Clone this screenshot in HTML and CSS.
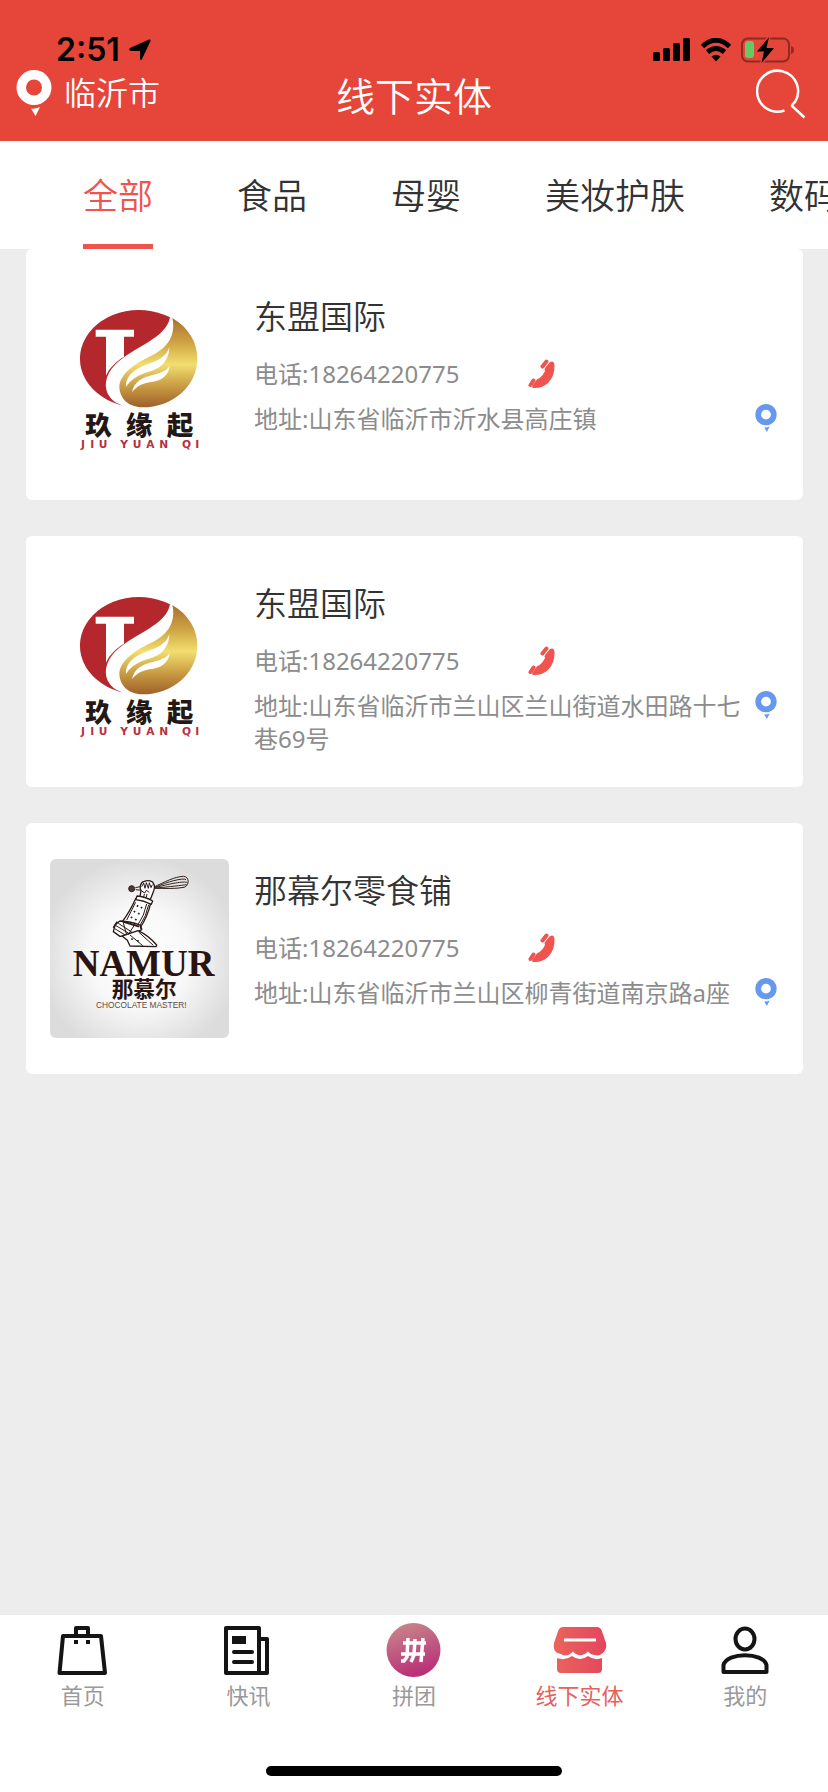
FILE: index.html
```html
<!DOCTYPE html>
<html lang="zh-CN">
<head>
    <meta charset="UTF-8">
    <meta name="viewport" content="width=device-width, initial-scale=1.0">
    <title>线下实体</title>
    <link rel="stylesheet" href="styles.css">
</head>
<body>
    <!-- Shared symbols -->
    <svg class="symbols" aria-hidden="true">
        <defs>
            <linearGradient id="gold" x1="0" y1="0" x2="0" y2="1">
                <stop offset="0" stop-color="#a8702f"/>
                <stop offset="0.28" stop-color="#d0a544"/>
                <stop offset="0.52" stop-color="#f2de6e"/>
                <stop offset="0.75" stop-color="#cb9f45"/>
                <stop offset="1" stop-color="#9f6029"/>
            </linearGradient>
            <radialGradient id="plate" cx="0.5" cy="0.55" r="0.56">
                <stop offset="0" stop-color="#ffffff"/>
                <stop offset="0.5" stop-color="#f8f8f8"/>
                <stop offset="1" stop-color="#dcdcdc"/>
            </radialGradient>
            <linearGradient id="shopFill" x1="0" y1="0" x2="1" y2="0">
                <stop offset="0" stop-color="#ea645c"/>
                <stop offset="1" stop-color="#e3465c"/>
            </linearGradient>
            <linearGradient id="groupFill" x1="0" y1="0" x2="0.3" y2="1">
                <stop offset="0" stop-color="#c98d8c"/>
                <stop offset="1" stop-color="#ba3278"/>
            </linearGradient>
        </defs>
        <symbol id="pin" viewBox="0 0 36 46">
            <path fill="currentColor" fill-rule="evenodd" d="M18 0a17.500 17.500 0 1 1 0 35a17.500 17.500 0 1 1 0-35zM18 9.500a8 8 0 1 0 0 16a8 8 0 1 0 0-16z"/>
            <path fill="currentColor" d="M15 38.500q4 .8 9-1.500l-4.500 9z"/>
        </symbol>
        <symbol id="phone" viewBox="0 0 28 30">
            <path fill="currentColor" d="M22 3Q26 1 26.500 6Q27 17 20 24Q14 29.500 5.500 29Q3.500 28.500 4.500 26.500L8.500 21Q9.500 19 11 19.500Q15 17 17 12Q16 10.500 17 9z"/>
            <path stroke="currentColor" stroke-width="4" stroke-linecap="round" fill="none" d="M14.500 7.500L18.500 2.500M2.500 26L5.500 21.500"/>
        </symbol>
    </svg>

    <header class="header">
        <!-- Status bar -->
        <div class="status">
            <div class="status-left">
                <span class="time">2:51</span>
                <svg width="22" height="22" viewBox="0 0 22 22"><path d="M1 9L20 .5Q22 0 21.500 2L13 20Q12 22 11 20V12H2Q-1 11 1 9z"/></svg>
            </div>
            <div class="status-right">
                <svg width="38" height="24" viewBox="0 0 38 24"><rect x="0" y="14" width="7" height="9" rx="1.500"/><rect x="10" y="10" width="7" height="13" rx="1.500"/><rect x="20" y="5" width="7" height="18" rx="1.500"/><rect x="30" y="0" width="7" height="23" rx="1.500"/></svg>
                <svg width="32" height="24" viewBox="0 0 32 24"><path d="M2.500 8.500Q16-4 29.500 8.500M7.500 14Q16 7 24.500 14" fill="none" stroke="#000" stroke-width="5"/><path d="M11.500 18.500q4.500-3.500 9 0L16 23.500z"/></svg>
                <svg width="54" height="26" viewBox="0 0 54 26">
                    <rect x="1" y="1.500" width="47" height="23" rx="6" fill="none" stroke="#8d2a24" stroke-width="2"/>
                    <path fill="#8d2a24" d="M50 9q3 1 3 4t-3 4z"/>
                    <rect x="4" y="4" width="9" height="17" rx="3" fill="#67c966"/>
                    <path d="M28 0L16 14.500H23L20.500 26L33 11H25.500z" stroke="#e64539" stroke-width="3" paint-order="stroke"/>
                </svg>
            </div>
        </div>
        <div class="title-bar">
            <button class="city" type="button">
                <svg width="36" height="46"><use href="#pin"/></svg>
                <span>临沂市</span>
            </button>
            <h1>线下实体</h1>
            <button class="search" type="button" aria-label="搜索">
                <svg width="50" height="50" viewBox="0 0 50 50"><path d="M28.500 41.500A20.500 20.500 0 1 1 39 33Q35.500 36 36 37L48.500 48.500" fill="none" stroke="#fff" stroke-width="2.500"/></svg>
            </button>
        </div>
    </header>

    <!-- Categories -->
    <nav class="tabs">
        <button class="tab active" type="button">全部</button>
        <button class="tab" type="button">食品</button>
        <button class="tab" type="button">母婴</button>
        <button class="tab" type="button">美妆护肤</button>
        <button class="tab" type="button">数码</button>
    </nav>

    <!-- Shops -->
    <main class="list">
        <article class="card">
            <svg class="thumb" viewBox="90 136 537 537">
                <g id="jiuyuanqi">
                    <path fill="#b3272d" d="M450 233C438 298 345 318 285 375C255 405 250 445 268 470C282 492 310 500 335 502A177 146 0 1 1 450 233z"/>
                    <path fill="#fff" d="M227 270h115v21h-30v60c-20 12-44 32-54 57v-117h-31z"/>
                    <path fill="url(#gold)" d="M457 235C508 265 532 310 532 357C532 440 457 503 367 503C325 503 298 475 298 440C300 400 350 368 400 345C445 322 468 285 457 235z"/>
                    <path fill="#fff" d="M318 442C316 402 356 382 392 370C425 358 441 345 448 322C448 355 430 382 396 393C355 405 332 418 318 442zM336 458C342 424 370 413 398 406C430 398 445 390 449 377C448 402 430 422 400 426C368 430 350 438 336 458z"/>
                    <text class="brand-cn" x="196 317 440" y="585">玖缘起</text>
                    <text class="brand-py" x="183 211 236 270 301 338 379 418 450 486 526" y="625">JIU YUAN QI</text>
                </g>
            </svg>
            <div class="info">
                <h2>东盟国际</h2>
                <div class="row">
                    <span class="tel">电话:18264220775</span>
                    <a class="call" href="tel:18264220775" aria-label="电话"><svg width="28" height="30"><use href="#phone"/></svg></a>
                </div>
                <div class="row address">
                    <p>地址:山东省临沂市沂水县高庄镇</p>
                    <button class="locate" type="button" aria-label="地址"><svg width="22" height="28"><use href="#pin"/></svg></button>
                </div>
            </div>
        </article>

        <article class="card">
            <svg class="thumb" viewBox="90 136 537 537"><use href="#jiuyuanqi"/></svg>
            <div class="info">
                <h2>东盟国际</h2>
                <div class="row">
                    <span class="tel">电话:18264220775</span>
                    <a class="call" href="tel:18264220775" aria-label="电话"><svg width="28" height="30"><use href="#phone"/></svg></a>
                </div>
                <div class="row address">
                    <p>地址:山东省临沂市兰山区兰山街道水田路十七巷69号</p>
                    <button class="locate" type="button" aria-label="地址"><svg width="22" height="28"><use href="#pin"/></svg></button>
                </div>
            </div>
        </article>

        <article class="card">
            <svg class="thumb" viewBox="30 57 537 537">
                <rect x="30" y="57" width="537" height="537" fill="url(#plate)"/>
                <!-- whisk -->
                <g fill="none" stroke="#33201b" stroke-width="3">
                    <path d="M340 142C375 125 405 110 430 109C449 109 449 137 432 142C405 147 375 145 340 145M345 142C380 126 430 112 438 119M345 143C385 132 435 122 442 128M348 144C390 140 425 136 440 134M286 143l20-4M287 149l20 2"/>
                    <ellipse cx="275" cy="146" rx="9" ry="9" fill="#4c3934"/>
                </g>
                <!-- hand and armoured arm -->
                <g fill="#fff" stroke="#2b1915" stroke-width="4" stroke-linejoin="round">
                    <path d="M300 170L303 152C297 143 302 126 313 124C324 119 339 123 341 132C346 139 342 151 339 158L329 184z"/>
                    <path d="M287 176L332 190C326 215 316 240 301 262L246 246C262 225 276 200 287 176z"/>
                    <path d="M291 168q24 2 47 15l-4 10q-23-12-47-14z"/>
                    <path d="M240 243q34 2 60 12l5 14l-34 18l-31 2l-20-14l6-22z"/>
                    <path d="M246 288L294 272Q325 286 350 315L348 320L270 318L262 301z"/>
                    <path fill="none" stroke-width="3" d="M305 140l6-11l4 16l4-17l6 17l3-17l5 15l4-9M304 152l10 7l5-8l9 6M313 162l-2 10M321 162l-2 10M287 187l-27 53M320 192q-7 35-26 62M326 194q-7 35-26 62M228 257l40 24M224 266l30 18M235 250l40 26M250 248l9 34M285 252l-20 32M270 285l38 32M296 276l44 40"/>
                    <path fill="none" stroke-width="5" d="M294 196l-3 4M285 213l-3 4M276 230l-3 4M306 201l-3 4M298 219l-3 4M289 237l-3 4M232 245l-12 18M302 260l3 8M248 245l50 15M274 296l4 3M292 301l4 3"/>
                </g>
                <text class="namur-en" x="98" y="408">NAMUR</text>
                <text class="namur-cn" x="215" y="472">那慕尔</text>
                <text class="namur-sub" x="168" y="505">CHOCOLATE MASTER!</text>
            </svg>
            <div class="info">
                <h2>那幕尔零食铺</h2>
                <div class="row">
                    <span class="tel">电话:18264220775</span>
                    <a class="call" href="tel:18264220775" aria-label="电话"><svg width="28" height="30"><use href="#phone"/></svg></a>
                </div>
                <div class="row address">
                    <p>地址:山东省临沂市兰山区柳青街道南京路a座</p>
                    <button class="locate" type="button" aria-label="地址"><svg width="22" height="28"><use href="#pin"/></svg></button>
                </div>
            </div>
        </article>
    </main>

    <!-- Bottom bar -->
    <footer class="bottom">
        <nav class="menu">
            <a href="#">
                <svg width="56" height="56" viewBox="0 0 56 56"><g fill="none" stroke="#141414" stroke-width="4" stroke-linejoin="round"><path d="M8 13H46L50 50H4.500z"/><path d="M21 13V5H33V13"/></g><path fill="#141414" d="M19 17h4v4h-4zM31 17h4v4h-4z"/></svg>
                <span>首页</span>
            </a>
            <a href="#">
                <svg width="56" height="56" viewBox="0 0 56 56"><g fill="none" stroke="#141414" stroke-width="4" stroke-linecap="round" stroke-linejoin="round"><path d="M6 5H39V50H6zM39 16H47V50H39M14 29H32M14 39H32"/></g><path fill="#141414" d="M12 13h14v8H12z"/></svg>
                <span>快讯</span>
            </a>
            <a href="#">
                <svg width="56" height="56" viewBox="0 0 56 56"><circle cx="27.500" cy="27" r="27" fill="url(#groupFill)"/><path d="M17 20H40M15 31H39M22 15L21 34L18 38L15 38M29 16L28 32L25 39M37 15L35 39" fill="none" stroke="#fff" stroke-width="3.500"/></svg>
                <span>拼团</span>
            </a>
            <a class="current" href="#">
                <svg width="56" height="56" viewBox="0 0 56 56"><path fill="url(#shopFill)" d="M11 4H45Q48 4 49.500 7L54 20C56 28 48 34 43 32Q39 32 36 28.500Q28 36 21 28.500Q15 35 9 31Q0 30 2 20L6.500 7Q8 4 11 4zM5 35Q13 38 20 33Q28 39 36 33Q43 38 50 35V46Q50 50 46 50H9Q5 50 5 46z"/><path d="M12 17H44" stroke="#fff" stroke-width="3"/></svg>
                <span>线下实体</span>
            </a>
            <a href="#">
                <svg width="56" height="56" viewBox="0 0 56 56"><g fill="none" stroke="#141414" stroke-width="4" stroke-linejoin="round"><ellipse cx="28" cy="16" rx="9.500" ry="10.500"/><path d="M6.500 49V42C10 29 46 29 49.500 42V49z"/></g></svg>
                <span>我的</span>
            </a>
        </nav>
        <div class="home-bar"></div>
    </footer>
</body>
</html>
```

FILE: styles.css
```css
* {
    box-sizing: border-box;
}

body {
    margin: 0;
    min-height: 100vh;
    display: flex;
    flex-direction: column;
    background-color: #ededed;
    color: #333;
    font-family: "Noto Sans", "Noto Sans CJK SC", sans-serif;
    font-weight: 350;
    overflow-x: hidden;
}

h1, h2, p {
    margin: 0;
    font-weight: inherit;
}

button {
    padding: 0;
    border: none;
    background: none;
    color: inherit;
    font: inherit;
    cursor: pointer;
}

a {
    color: inherit;
    text-decoration: none;
}

svg {
    display: block;
    flex-shrink: 0;
}

.symbols {
    position: absolute;
    width: 0;
    height: 0;
}

/* Header */
.header {
    padding: 36px 16px 17px;
    background-color: #e64539;
    color: #fff;
}

.status {
    display: flex;
    justify-content: space-between;
    align-items: center;
    height: 28px;
    padding: 0 17px 0 40px;
    color: #000;
}

.status-left,
.status-right {
    display: flex;
    align-items: center;
    gap: 9px;
}

.time {
    font-family: Inter, sans-serif;
    font-weight: 600;
    font-size: 32px;
    line-height: 28px;
}

.title-bar {
    display: grid;
    grid-template-columns: 1fr auto 1fr;
    align-items: center;
    height: 60px;
}

.city {
    display: flex;
    align-items: center;
    gap: 12px;
    padding-bottom: 2px;
    font-size: 32px;
    line-height: 46px;
}

.title-bar h1 {
    padding-top: 4px;
    font-size: 39px;
    line-height: 56px;
}

.search {
    justify-self: end;
    margin-right: 6px;
}

/* Category tabs */
.tabs {
    display: flex;
    gap: 84px;
    height: 108px;
    padding-left: 83px;
    background-color: #fff;
    overflow: hidden;
}

.tab {
    flex-shrink: 0;
    padding-top: 1px;
    border-bottom: 5px solid transparent;
    font-size: 35px;
    white-space: nowrap;
}

.tab.active {
    color: #ef544f;
    border-color: #ef544f;
}

/* Shop cards */
.list {
    flex: 1;
    display: flex;
    flex-direction: column;
    gap: 36px;
    padding: 0 25px 36px 26px;
}

.card {
    display: flex;
    align-items: center;
    gap: 25px;
    min-height: 251px;
    padding: 0 26px 0 24px;
    background-color: #fff;
    border-radius: 6px;
}

.thumb {
    width: 179px;
    height: 179px;
    border-radius: 6px;
}

.info {
    flex: 1;
    align-self: flex-start;
    padding-top: 45px;
}

.info h2 {
    margin-bottom: 17px;
    font-size: 33px;
    line-height: 46px;
}

.row {
    display: flex;
    align-items: center;
    color: #8c8c8c;
    font-size: 24px;
    font-weight: 400;
    line-height: 33px;
}

.tel {
    min-width: 274px;
}

.call {
    color: #ef544f;
}

.address {
    align-items: flex-start;
    gap: 8px;
    margin-top: 12px;
}

.address p {
    flex: 1;
}

.locate {
    padding-top: 2px;
    color: #6699ee;
}

/* Logo lettering */
.brand-cn {
    font-family: "Noto Sans CJK SC", sans-serif;
    font-weight: 900;
    font-size: 80px;
    fill: #231815;
}

.brand-py {
    font-family: "DejaVu Sans", sans-serif;
    font-weight: 700;
    font-size: 32px;
    fill: #b8303f;
}

.namur-en {
    font-family: "Liberation Serif", serif;
    font-weight: 700;
    font-size: 111px;
    fill: #2b1410;
}

.namur-cn {
    font-family: "Noto Sans CJK SC", sans-serif;
    font-weight: 700;
    font-size: 65px;
    fill: #2b1410;
}

.namur-sub {
    font-family: "Liberation Sans", sans-serif;
    font-weight: 400;
    font-size: 25px;
    fill: #5d4a46;
}

/* Bottom bar */
.bottom {
    position: sticky;
    bottom: 0;
    padding-bottom: 16px;
    background-color: #fff;
}

.menu {
    display: flex;
    padding-top: 8px;
}

.menu a {
    flex: 1;
    display: flex;
    flex-direction: column;
    align-items: center;
    color: #999;
    font-size: 22px;
    font-weight: 400;
    line-height: 32px;
}

.menu .current {
    color: #e5615a;
}

.home-bar {
    width: 296px;
    height: 10px;
    margin: 55px auto 0;
    border-radius: 5px;
    background-color: #000;
}
```
